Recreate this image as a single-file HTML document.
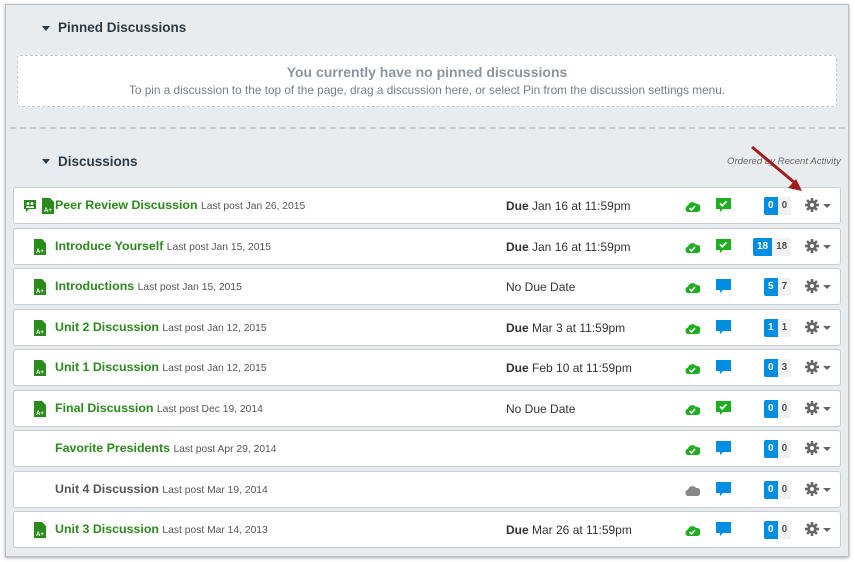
<!DOCTYPE html>
<html><head><meta charset="utf-8"><style>
*{margin:0;padding:0;box-sizing:border-box}
body{width:855px;height:562px;background:#fff;font-family:"Liberation Sans",Arial,sans-serif;position:relative;overflow:hidden}
.frame{position:absolute;left:5px;top:4px;width:844px;height:553px;background:#e9ecef;border:1px solid #b9bcc0;box-shadow:0 1px 3px rgba(0,0,0,.35)}
.abs{position:absolute}
h2{position:absolute;font-size:13.5px;font-weight:bold;color:#2d3b45}
.tri{position:absolute;width:0;height:0;border-left:4px solid transparent;border-right:4px solid transparent;border-top:5px solid #2d3b45}
.pin{position:absolute;left:17px;top:55px;width:820px;height:52px;background:#fff;border:1px dashed #c5c9cd;border-radius:3px;text-align:center}
.pin b{display:block;font-size:14px;color:#8b969e;margin-top:8px}
.pin span{display:block;font-size:11.8px;color:#73818b;margin-top:3px}
.sep{position:absolute;left:10px;top:127px;width:835px;border-top:2px dashed #c9cdd1}
.row{position:absolute;left:13px;width:828px;height:37px;background:#fff;border:1px solid #c7cdd1;border-radius:3px}
.t{position:absolute;left:41px;top:10px;font-size:12.4px;font-weight:bold;color:#2a8a1a;white-space:nowrap}
.t small{font-size:10.3px;font-weight:normal;color:#555}
.t.g{color:#555}
.due{position:absolute;left:492px;top:11px;font-size:12px;color:#333}
.due b{font-weight:bold}
.doc{position:absolute;left:20px;top:10px}
.cl{position:absolute;left:671px;top:12px}
.cm{position:absolute;left:701px;top:9px}
.bd{position:absolute;top:9px;height:18px;display:flex;font-size:10px;font-weight:bold}
.bd .a{background:#008ee2;color:#fff;padding:0 4px;border-radius:2px 0 0 2px;line-height:18px;text-align:center}
.bd .b{background:#f1f1f1;color:#555;padding:0 4px;border-radius:0 2px 2px 0;line-height:18px}
.gear{position:absolute;left:791px;top:10px}
.car{position:absolute;left:809px;top:16px;border-left:4px solid transparent;border-right:4px solid transparent;border-top:4px solid #666}
</style></head><body>
<div class="frame"></div>
<div class="tri" style="left:42px;top:26px"></div>
<h2 style="left:58px;top:20px">Pinned Discussions</h2>
<div class="pin"><b>You currently have no pinned discussions</b><span>To pin a discussion to the top of the page, drag a discussion here, or select Pin from the discussion settings menu.</span></div>
<div class="sep"></div>
<div class="tri" style="left:42px;top:159px"></div>
<h2 style="left:58px;top:154px">Discussions</h2>
<div class="abs" style="left:727px;top:156px;font-size:9.6px;font-style:italic;color:#666">Ordered by Recent Activity</div>

<svg width="0" height="0" style="position:absolute"><defs>
<g id="doc"><path d="M0 0h8l4 4v12H0z" fill="#2a8a1a"/><text x="2" y="14" font-size="6" fill="#fff" font-family="Liberation Sans" font-weight="bold">A+</text></g>
<g id="cloud"><path d="M2.5 12a3.5 3.5 0 0 1 0.5-6.5 4.5 4.5 0 0 1 8-1.5 3.5 3.5 0 0 1 1.5 8z" /></g>
</defs></svg>

<div id="rows"></div>
<script>
var R=[
["Peer Review Discussion","Jan 26, 2015","Jan 16 at 11:59pm",1,1,"0","0",1,1],
["Introduce Yourself","Jan 15, 2015","Jan 16 at 11:59pm",1,1,"18","18",0,1],
["Introductions","Jan 15, 2015","",1,0,"5","7",0,1],
["Unit 2 Discussion","Jan 12, 2015","Mar 3 at 11:59pm",1,0,"1","1",0,1],
["Unit 1 Discussion","Jan 12, 2015","Feb 10 at 11:59pm",1,0,"0","3",0,1],
["Final Discussion","Dec 19, 2014","",1,1,"0","0",0,1],
["Favorite Presidents","Apr 29, 2014",null,1,0,"0","0",0,0],
["Unit 4 Discussion","Mar 19, 2014",null,0,0,"0","0",0,0,1],
["Unit 3 Discussion","Mar 14, 2013","Mar 26 at 11:59pm",1,0,"0","0",0,1]];
var tops=[187,228,268,309,349,390,430,471,511],h="";
R.forEach(function(r,i){
 var grey=r[9];
 h+='<div class="row" style="top:'+tops[i]+'px">';
 if(r[8]){h+='<svg class="doc" width="13" height="17" style="left:'+(r[7]?28:20)+'px"><use href="#doc"/></svg>';}
 if(r[7]){h+='<svg class="abs" style="left:9px;top:11px" width="14" height="14"><path d="M1 1h12v9H6l-3 3v-3H1z" fill="#2a8a1a"/><circle cx="5" cy="4.5" r="1.5" fill="#fff"/><circle cx="9" cy="4.5" r="1.5" fill="#fff"/><path d="M3 9a2 2 0 0 1 4 0M7 9a2 2 0 0 1 4 0" fill="#fff"/></svg>';}
 h+='<div class="t'+(grey?' g':'')+'">'+r[0]+' <small>Last post '+r[1]+'</small></div>';
 if(r[2]!==null){h+='<div class="due">'+(r[2]?'<b>Due</b> '+r[2]:'No Due Date')+'</div>';}
 h+='<svg class="cl" width="15" height="13"><g fill="'+(grey?'#888':'#1fae1f')+'"><use href="#cloud"/></g>'+(grey?'':'<path d="M4.5 8l2 2 3.5-4" stroke="#fff" stroke-width="1.6" fill="none"/>')+'</svg>';
 h+='<svg class="cm" width="17" height="17">'+(r[4]?'<path d="M1 1h15v11H8l-3 3v-3H1z" fill="#1fae1f"/><path d="M5 6.5l2.2 2.2 4.3-4.3" stroke="#fff" stroke-width="1.8" fill="none"/>':'<path d="M1 1h15v11H8l-3 3v-3H1z" fill="#008ee2"/>')+'</svg>';
 var wide=r[5].length>1;
 h+='<div class="bd" style="left:'+(wide?739:750)+'px"><span class="a">'+r[5]+'</span><span class="b">'+r[6]+'</span></div>';
 h+='<svg class="gear" width="14" height="14" viewBox="0 0 13 13"><g fill="#666"><circle cx="6.5" cy="6.5" r="4.3"/><rect x="5.3" y="0" width="2.4" height="13"/><rect x="0" y="5.3" width="13" height="2.4"/><rect x="5.3" y="0" width="2.4" height="13" transform="rotate(45 6.5 6.5)"/><rect x="5.3" y="0" width="2.4" height="13" transform="rotate(-45 6.5 6.5)"/></g><circle cx="6.5" cy="6.5" r="1.8" fill="#fff"/></svg><div class="car"></div>';
 h+='</div>';
});
document.getElementById("rows").innerHTML=h;
</script>
<svg class="abs" style="left:748px;top:143px" width="60" height="52"><line x1="4" y1="4" x2="47" y2="40" stroke="#a11c1c" stroke-width="3"/><path d="M54 48l-14-3 8-9z" fill="#a11c1c"/></svg>
</body></html>
